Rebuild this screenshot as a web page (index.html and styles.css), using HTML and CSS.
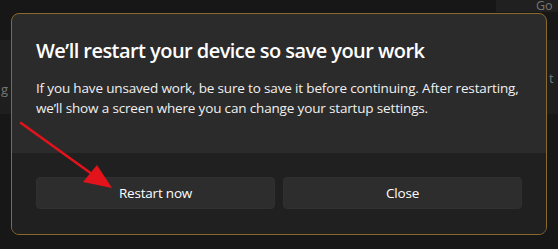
FILE: index.html
```html
<!DOCTYPE html>
<html lang="en">
<head>
<meta charset="utf-8">
<title>Restart</title>
<link rel="stylesheet" href="styles.css">
</head>
<body>
<div class="backdrop">
  <div class="bg-top-right"><span class="ghost ghost-go">Go</span></div>
  <div class="bg-left-band"><span class="ghost ghost-g">g</span></div>
  <div class="bg-right-band"><span class="ghost ghost-ta">t</span></div>
</div>
<div class="dialog">
  <div class="dialog-body">
    <h1 class="dialog-title">We’ll restart your device so save your work</h1>
    <p class="dialog-text">If you have unsaved work, be sure to save it before continuing. After restarting, we’ll show a screen where you can change your startup settings.</p>
  </div>
  <div class="dialog-footer">
    <button class="btn">Restart now</button>
    <button class="btn">Close</button>
  </div>
</div>
<svg class="arrow" width="558" height="249" viewBox="0 0 558 249">
  <line x1="21" y1="123" x2="96" y2="177" stroke="#e3131b" stroke-width="2.6" stroke-linecap="round"/>
  <polygon points="112,188 83,182 97,165" fill="#e3131b"/>
</svg>
</body>
</html>
```
FILE: styles.css
```css
* { box-sizing: border-box; }
html, body { margin: 0; }
body {
  width: 558px;
  height: 249px;
  overflow: hidden;
  background: #171717;
  padding: 13px 11px 0 11px;
  position: relative;
  font-family: "Open Sans", "Noto Sans", sans-serif;
}
.backdrop { position: absolute; inset: 0; }
.bg-top-right {
  position: absolute; left: 496px; top: 0; width: 62px; height: 12px;
  background: #202020;
}
.bg-left-band {
  position: absolute; left: 0; top: 40px; width: 11px; height: 74px;
  background: #1e1e1e;
}
.bg-right-band {
  position: absolute; left: 547px; top: 40px; width: 11px; height: 74px;
  background: #1e1e1e;
}
.ghost {
  position: absolute; color: #777777; font-size: 13px; line-height: 14px; white-space: nowrap;
  font-family: "Open Sans", sans-serif;
}
.ghost-go { left: 40px; top: 0; font-size: 12.5px; line-height: 12px; }
.ghost-g { left: 1px; top: 42px; }
.ghost-ta { left: 2px; top: 31px; }

.dialog {
  position: relative;
  width: 536px;
  height: 222px;
  border: 1px solid #8a6a2c;
  border-radius: 8px;
  background: #2b2b2b;
  overflow: hidden;
  display: flex;
  flex-direction: column;
}
.dialog-body {
  padding: 23px 24px 0 24px;
  flex: 1;
}
.dialog-title {
  margin: 0 0 14px 0;
  font-size: 20px;
  line-height: 28px;
  font-weight: 600;
  color: #ffffff;
  letter-spacing: -0.55px;
}
.dialog-text {
  margin: 0 -8px 0 0;
  font-size: 13.5px;
  line-height: 19.5px;
  color: #f0f0f0;
  letter-spacing: -0.16px;
}
.dialog-footer {
  height: 81px;
  background: #202020;
  padding: 24px 24px 24px 24px;
  display: flex;
  gap: 8px;
}
.btn {
  flex: 1;
  height: 32px;
  border: 1px solid #303030;
  border-radius: 4px;
  background: #2d2d2d;
  color: #ffffff;
  font-family: inherit;
  font-size: 13.5px;
  letter-spacing: -0.2px;
}
.arrow { position: absolute; left: 0; top: 0; pointer-events: none; }
```
